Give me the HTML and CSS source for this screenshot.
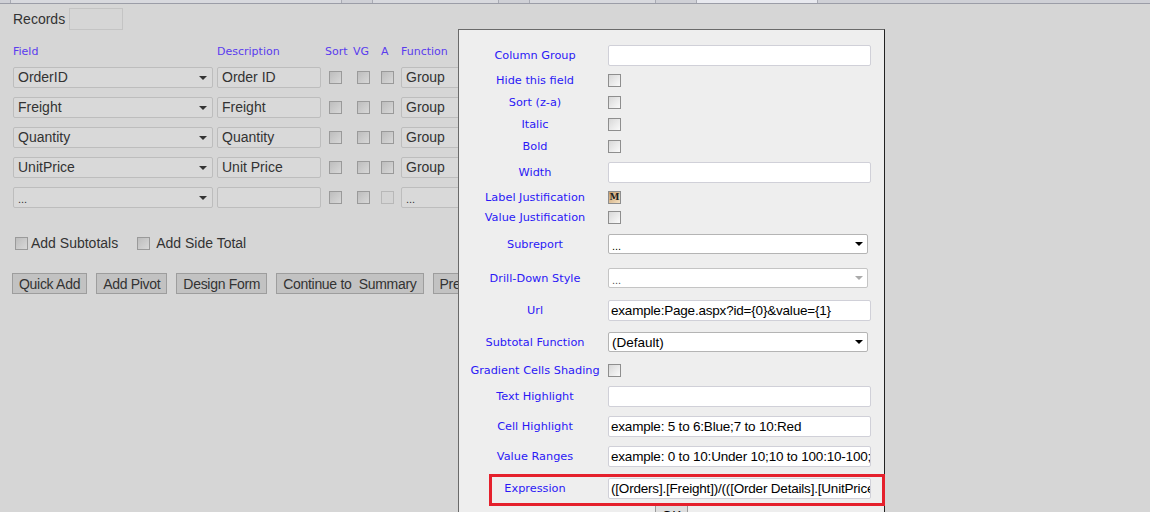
FILE: index.html
```html
<!DOCTYPE html>
<html>
<head>
<meta charset="utf-8">
<link rel="stylesheet" href="styles.css">
</head>
<body>
<div class="topbar">
  <span class="tab t1"></span><span class="tab t2"></span><span class="tab t3"></span><span class="tab t4 active"></span>
</div>
<div class="page">
  <div class="records"><span>Records</span><span class="recbox"></span></div>
  <div class="grid">
    <div class="hd">Field</div><div class="hd">Description</div><div class="hd">Sort</div><div class="hd">VG</div><div class="hd">A</div><div class="hd">Function</div>

    <div><div class="msel">OrderID<span class="arr"></span></div></div>
    <div><div class="minp">Order ID</div></div>
    <div><span class="cb"></span></div><div><span class="cb"></span></div><div><span class="cb a"></span></div>
    <div><div class="mfun">Group</div></div>

    <div><div class="msel">Freight<span class="arr"></span></div></div>
    <div><div class="minp">Freight</div></div>
    <div><span class="cb"></span></div><div><span class="cb"></span></div><div><span class="cb a"></span></div>
    <div><div class="mfun">Group</div></div>

    <div><div class="msel">Quantity<span class="arr"></span></div></div>
    <div><div class="minp">Quantity</div></div>
    <div><span class="cb"></span></div><div><span class="cb"></span></div><div><span class="cb a"></span></div>
    <div><div class="mfun">Group</div></div>

    <div><div class="msel">UnitPrice<span class="arr"></span></div></div>
    <div><div class="minp">Unit Price</div></div>
    <div><span class="cb"></span></div><div><span class="cb"></span></div><div><span class="cb a"></span></div>
    <div><div class="mfun">Group</div></div>

    <div><div class="msel small">...<span class="arr"></span></div></div>
    <div><div class="minp"></div></div>
    <div><span class="cb"></span></div><div><span class="cb"></span></div><div><span class="cb a dis"></span></div>
    <div><div class="mfun small">...</div></div>
  </div>
  <div class="totals">
    <span class="cb"></span><span class="tl">Add Subtotals</span>
    <span class="cb second"></span><span class="tl">Add Side Total</span>
  </div>
  <div class="buttons">
    <span class="btn">Quick Add</span>
    <span class="btn">Add Pivot</span>
    <span class="btn">Design Form</span>
    <span class="btn">Continue to&nbsp; Summary</span>
    <span class="btn">Preview</span>
  </div>
</div>

<div class="dialog">
  <div class="row h28"><label>Column Group</label><div class="dinp"></div></div>
  <div class="row h22"><label>Hide this field</label><span class="dcb"></span></div>
  <div class="row h22"><label>Sort (z-a)</label><span class="dcb"></span></div>
  <div class="row h22"><label>Italic</label><span class="dcb"></span></div>
  <div class="row h22"><label>Bold</label><span class="dcb"></span></div>
  <div class="row h30"><label>Width</label><div class="dinp"></div></div>
  <div class="row h20"><label>Label Justification</label><span class="dcb m">M</span></div>
  <div class="row h20"><label>Value Justification</label><span class="dcb"></span></div>
  <div class="row h34"><label>Subreport</label><div class="dsel small">...<span class="darr"></span></div></div>
  <div class="row h34"><label>Drill-Down Style</label><div class="dsel small dis">...<span class="darr"></span></div></div>
  <div class="row h30"><label>Url</label><div class="dinp">example:Page.aspx?id={0}&amp;value={1}</div></div>
  <div class="row h34"><label>Subtotal Function</label><div class="dsel">(Default)<span class="darr"></span></div></div>
  <div class="row h22"><label>Gradient Cells Shading</label><span class="dcb"></span></div>
  <div class="row h30"><label>Text Highlight</label><div class="dinp"></div></div>
  <div class="row h30"><label>Cell Highlight</label><div class="dinp">example: 5 to 6:Blue;7 to 10:Red</div></div>
  <div class="row h30"><label>Value Ranges</label><div class="dinp">example: 0 to 10:Under 10;10 to 100:10-100;100 to 1000:Over 100</div></div>
  <div class="row h34"><label>Expression</label><div class="dinp">([Orders].[Freight])/(([Order Details].[UnitPrice]*[Order Details].[Quantity]))</div></div>
  <div class="okrow"><span class="ok">OK</span></div>
  <div class="redbox"></div>
</div>
</body>
</html>
```

FILE: styles.css
```css
html, body {
  margin: 0;
  padding: 0;
  background: #d6d6d6;
  width: 1150px;
  height: 512px;
  overflow: hidden;
  font-family: "Liberation Sans", Arial, sans-serif;
  color: #333;
}

.topbar {
  height: 3px;
  background: #cfd0d6;
  border-bottom: 1px solid #9b9da7;
  display: flex;
}
.tab {
  display: block;
  height: 3px;
  border-left: 1px solid #a9abb4;
  border-right: 1px solid #a9abb4;
  background: #d8d9de;
}
.t1 { width: 330px; margin-left: 10px; }
.t2 { width: 125px; margin-left: 30px; }
.t3 { width: 125px; margin-left: 30px; }
.t4 { width: 120px; margin-left: 40px; background: #e8e9ef; }

.page {
  padding-left: 13px;
}

.records {
  margin-top: 4px;
  height: 22px;
  display: flex;
  align-items: center;
  font-size: 14px;
  color: #333;
}
.recbox {
  width: 52px;
  height: 20px;
  border: 1px solid #c4c4c4;
  margin-left: 4px;
}

.grid {
  margin-top: 11px;
  display: grid;
  grid-template-columns: 204px 108px 28px 28px 20px 120px;
  grid-template-rows: 21px repeat(5, 30px);
  align-items: center;
}
.hd {
  font-family: "DejaVu Sans", Verdana, sans-serif;
  font-size: 11px;
  color: #5a3cee;
}
.grid > div {
  display: flex;
  align-items: center;
}
.msel, .minp, .mfun {
  box-sizing: border-box;
  height: 21px;
  border: 1px solid #bdbdbd;
  background: #d9d9d9;
  font-size: 14px;
  color: #333;
  display: flex;
  align-items: center;
  padding-left: 4px;
  position: relative;
  border-radius: 2px;
}
.msel { width: 200px; }
.minp { width: 104px; }
.mfun { width: 100px; }
.small { font-size: 11px; padding-top: 3px; }
.arr {
  position: absolute;
  right: 5px;
  top: 8px;
  width: 0;
  height: 0;
  border-left: 4px solid transparent;
  border-right: 4px solid transparent;
  border-top: 4px solid #333;
}

.cb {
  display: inline-block;
  box-sizing: border-box;
  width: 13px;
  height: 13px;
  border: 1px solid #9a9a9a;
  background: linear-gradient(135deg, #bdbdbd, #d8d8d8);
  margin-left: 4px;
}
.cb.a { margin-left: 0; }
.cb.dis { border-color: #b8b8b8; background: #d4d4d4; }

.totals {
  margin-top: 21px;
  height: 20px;
  display: flex;
  align-items: center;
  font-size: 14px;
}
.totals .cb { margin-left: 2px; }
.tl { margin-left: 3px; }
.totals .cb.second { margin-left: 19px; }
.totals .second + .tl { margin-left: 6px; }

.buttons {
  margin-top: 20px;
  margin-left: -1px;
  display: flex;
  gap: 9px;
}
.btn {
  box-sizing: border-box;
  height: 21px;
  padding: 0 6px;
  border: 1px solid #9d9d9d;
  background: #c2c2c2;
  font-size: 14px;
  letter-spacing: -0.3px;
  color: #333;
  display: flex;
  align-items: center;
  white-space: nowrap;
}

.dialog {
  position: absolute;
  left: 458px;
  top: 29px;
  width: 427px;
  height: 520px;
  background: #eeeeee;
  border: 1px solid #6a6a6a;
  border-right-color: #222;
  padding: 11px 0 0 7px;
  box-sizing: border-box;
}
.row {
  display: flex;
  align-items: center;
}
.h20 { height: 20px; }
.h22 { height: 22px; }
.h28 { height: 28px; }
.h30 { height: 30px; }
.h34 { height: 34px; }
.row label {
  width: 138px;
  text-align: center;
  font-family: "DejaVu Sans", Verdana, sans-serif;
  font-size: 11.3px;
  color: #2a18f6;
  margin-right: 4px;
  white-space: nowrap;
}
.dinp {
  box-sizing: border-box;
  width: 263px;
  height: 21px;
  background: #fff;
  border: 1px solid #d0d0d8;
  border-radius: 2px;
  font-size: 13.5px;
  letter-spacing: -0.2px;
  color: #000;
  padding-left: 2px;
  display: flex;
  align-items: center;
  white-space: nowrap;
  overflow: hidden;
}
.dsel {
  box-sizing: border-box;
  width: 260px;
  height: 20px;
  background: #fff;
  border: 1px solid #b4b4b4;
  border-radius: 2px;
  font-size: 13.5px;
  color: #000;
  padding-left: 3px;
  display: flex;
  align-items: center;
  position: relative;
}
.dsel.small { font-size: 11px; padding-top: 3px; }
.dsel.dis { color: #555; border-color: #c4c4c4; }
.darr {
  position: absolute;
  right: 4px;
  top: 7px;
  width: 0;
  height: 0;
  border-left: 4px solid transparent;
  border-right: 4px solid transparent;
  border-top: 4px solid #000;
}
.dsel.dis .darr { border-top-color: #aaa; }
.dcb {
  display: inline-block;
  box-sizing: border-box;
  width: 13px;
  height: 13px;
  border: 1px solid #8e8e8e;
  background: linear-gradient(135deg, #d8d8d8, #fafafa);
}
.dcb.m {
  font-family: "DejaVu Serif", serif;
  font-size: 9px;
  line-height: 11px;
  text-align: center;
  color: #222;
  background: linear-gradient(135deg, #c8a070, #f4e0c0);
  font-weight: bold;
}
.okrow {
  display: flex;
  justify-content: center;
  margin-left: -7px;
}
.ok {
  box-sizing: border-box;
  padding: 0 6px;
  height: 21px;
  border: 1px solid #9a9a9a;
  background: #dedede;
  font-size: 13.5px;
  color: #000;
  display: flex;
  align-items: center;
}
.redbox {
  position: absolute;
  left: 30px;
  top: 444px;
  width: 396px;
  height: 32px;
  box-sizing: border-box;
  border: 3px solid #e5202c;
}
```
